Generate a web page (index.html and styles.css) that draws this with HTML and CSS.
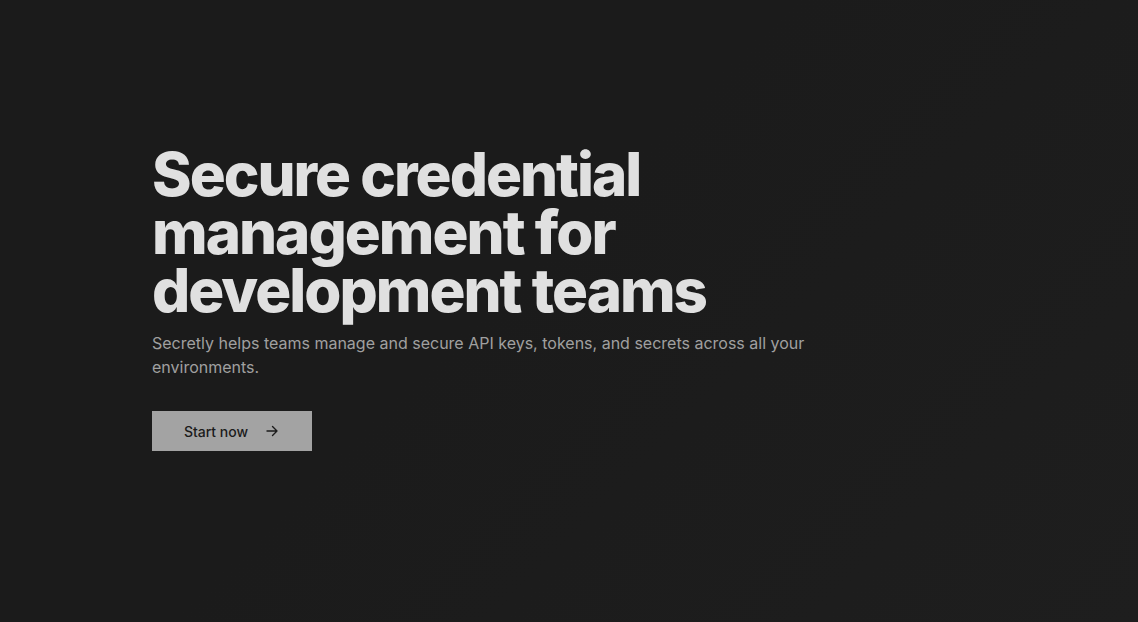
FILE: index.html
```html
<!DOCTYPE html>
<html lang="en">
<head>
<meta charset="utf-8">
<title>Secretly</title>
<link rel="stylesheet" href="styles.css">
</head>
<body>
<main class="hero">
  <div class="hero-content">
    <h1 class="hero-title">Secure credential management for development teams</h1>
    <p class="hero-text">Secretly helps teams manage and secure API keys, tokens, and secrets across all your environments.</p>
    <a class="hero-button" href="#">Start now
      <svg class="arrow" width="16" height="16" viewBox="0 0 16 16" fill="none" stroke="currentColor" stroke-width="1.4" stroke-linecap="round" stroke-linejoin="round"><path d="M3 8h10M8.5 3.5 13 8l-4.5 4.5"/></svg>
    </a>
  </div>
</main>
</body>
</html>
```
FILE: styles.css
```css
* { box-sizing: border-box; }
html, body { margin: 0; height: 100%; }
body {
  background: linear-gradient(135deg, #1b1b1b 0%, #1b1b1b 45%, #1e1e1e 100%);
  font-family: Inter, "Noto Sans", sans-serif;
  color: #e0e0e0;
}
.hero {
  min-height: 100vh;
  padding: 145px 152px 0;
}
.hero-content {
  display: flex;
  flex-direction: column;
  align-items: flex-start;
  max-width: 700px;
}
.hero-title {
  margin: 0;
  font-size: 60px;
  font-weight: 800;
  line-height: 58px;
  letter-spacing: -0.033em;
  color: #e0e0e0;
  max-width: 600px;
}
.hero-text {
  margin: 12px 0 0;
  font-size: 16px;
  line-height: 24px;
  color: #a0a0a0;
  max-width: 660px;
}
.hero-button {
  margin-top: 32px;
  display: inline-flex;
  align-items: center;
  justify-content: center;
  gap: 16px;
  width: 160px;
  height: 40px;
  background: #a3a3a3;
  color: #1b1b1b;
  font-size: 14px;
  font-weight: 500;
  text-decoration: none;
}
.arrow { display: block; }
```
